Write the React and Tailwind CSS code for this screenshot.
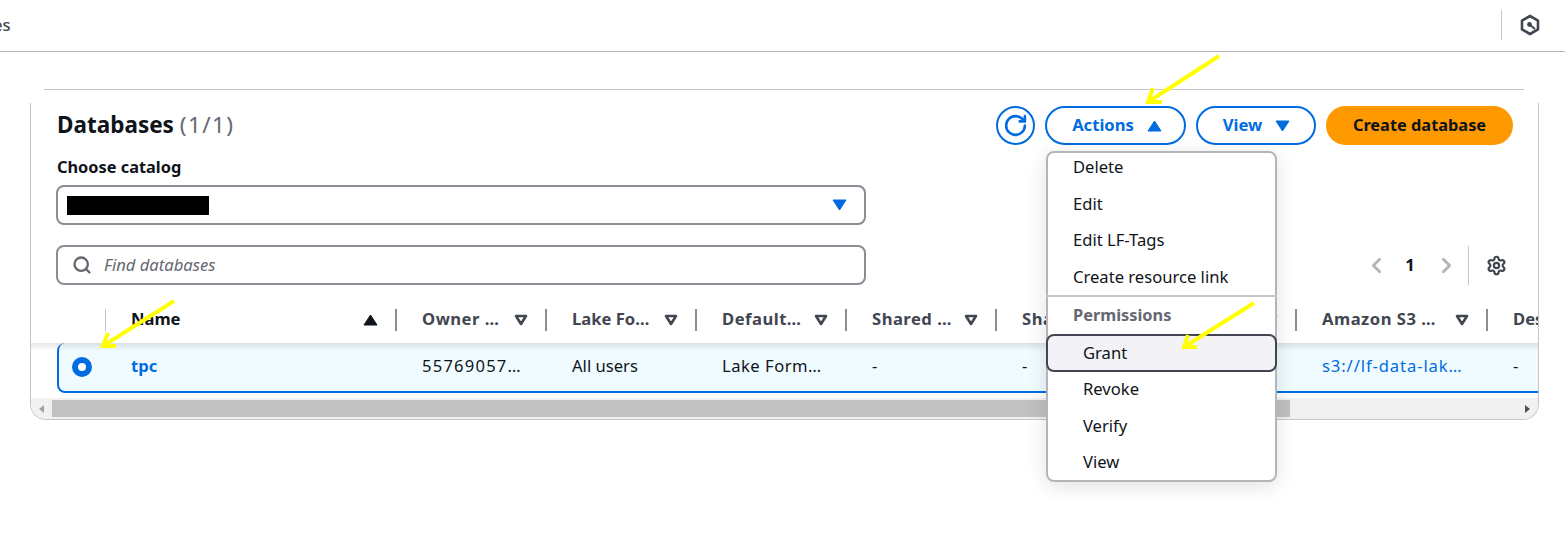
import React from "react";
import { RotateCw, Search, Settings, ChevronLeft, ChevronRight } from "lucide-react";

function Tri({ dir = "down", className = "" }) {
  return (
    <svg width="15" height="12" viewBox="0 0 15 12" className={className}>
      <path
        d={dir === "down" ? "M1 1h13L7.5 11z" : "M7.5 1L14 11H1z"}
        fill="currentColor"
        stroke="currentColor"
        strokeWidth="1"
        strokeLinejoin="round"
      />
    </svg>
  );
}

function HollowTri() {
  return (
    <svg width="14" height="12" viewBox="0 0 14 12" className="shrink-0 text-[#424650]">
      <path d="M2 2h10L7 10z" fill="none" stroke="currentColor" strokeWidth="2.6" strokeLinejoin="round" />
    </svg>
  );
}

function HeadCell({ label, wide, className = "" }) {
  return (
    <div className={`flex shrink-0 items-center pl-[25px] ${wide ? "w-[191px]" : "w-[150px]"}`}>
      <span className={`mb-[2px] min-w-0 flex-1 whitespace-nowrap font-bold text-[#424650] ${className}`}>{label}</span>
      <HollowTri />
      <span className="ml-[17px] h-[22px] w-[2px] bg-[#8c8c94]" />
    </div>
  );
}

function BodyCell({ children, wide, className = "" }) {
  return (
    <div className={`mb-[2px] shrink-0 whitespace-nowrap pl-[26px] ${wide ? "w-[191px]" : "w-[150px]"} ${className}`}>
      {children}
    </div>
  );
}

function MenuItem({ children, indent }) {
  return (
    <div className={`flex h-[36.5px] items-center text-[#0f141a] ${indent ? "pl-[35px]" : "pl-[25px]"}`}>{children}</div>
  );
}

function Arrow({ tip, tail, a, b }) {
  return (
    <g fill="none" stroke="#ffff00" strokeWidth="4">
      <path d={`M${tail[0]} ${tail[1]}L${tip[0]} ${tip[1]}`} />
      <path d={`M${a[0]} ${a[1]}L${tip[0]} ${tip[1]}L${b[0]} ${b[1]}`} />
    </g>
  );
}

export default function App() {
  return (
    <div
      className="relative h-[551px] w-[1565px] overflow-hidden bg-white text-[16.6px] leading-[22px] text-[#0f141a]"
      style={{ fontFamily: '"Noto Sans", "Open Sans", sans-serif' }}
    >
      <header className="flex h-[52px] items-center justify-between border-b border-[#b4b4bb]">
        <span className="-ml-[7px] -mt-[2px] font-medium text-[#424650]">es</span>
        <div className="-mt-[2px] flex h-[30px] items-center border-l border-[#c6c6cd] pl-[18px] pr-[25px]">
          <svg width="20" height="22" viewBox="0 0 20 22" fill="none" stroke="#424650" strokeWidth="2.6">
            <path d="M10 2l8 4.6v8.8L10 20l-8-4.6V6.6z" strokeLinejoin="round" />
            <circle cx="9.5" cy="10.5" r="2.4" fill="#424650" stroke="none" />
            <path d="M10 11l5 4" strokeWidth="2" />
          </svg>
        </div>
      </header>

      <div className="ml-[44px] mt-[37px] w-[1480px] border-t border-[#c6c6cd]" />

      <section className="ml-[30px] mt-[13px] h-[317px] w-[1509px] rounded-b-[16px] border-x border-b border-[#c6c6cd]">
        <div className="pl-[25px] pr-[25px] pt-[3px]">
          <div className="flex h-[39px] items-center justify-between">
            <h1 className="-mt-[2px] ml-[1px] text-[22.5px] font-bold leading-[30px]">
              Databases{" "}
              <span className="font-normal tracking-[1.4px] text-[#656871]">(1/1)</span>
            </h1>
            <div className="flex items-center gap-[10px]">
              <button className="flex h-[39px] w-[39px] items-center justify-center rounded-full border-2 border-[#006ce0] text-[#006ce0]">
                <RotateCw size={25} strokeWidth={2.5} />
              </button>
              <div className="relative">
                <button className="flex h-[39px] w-[141px] items-center justify-center gap-[13px] rounded-full border-2 border-[#006ce0] pl-[3px] font-bold text-[#006ce0]">
                  <span className="mb-[2px]">Actions</span> <Tri dir="up" />
                </button>
                <div className="absolute left-[1px] top-[45px] z-10 h-[331px] w-[231px] rounded-[8px] border-2 border-[#b4b4bb] bg-white shadow-[0_4px_20px_rgba(0,7,22,0.12)]">
                  <div className="-mt-[4px]">
                    <MenuItem>Delete</MenuItem>
                    <MenuItem>Edit</MenuItem>
                    <MenuItem>Edit LF-Tags</MenuItem>
                    <MenuItem>Create resource link</MenuItem>
                  </div>
                  <div className="-mx-[2px] border-t-2 border-[#c6c6cd]" />
                  <div className="flex h-[37px] items-center pb-[2px] pl-[25px] text-[16.35px] font-bold text-[#656871]">Permissions</div>
                  <div className="-mx-[2px] flex h-[38px] items-center rounded-[8px] border-2 border-[#424650] bg-[#f3f3f7] pl-[35px] text-[#0f141a]">
                    Grant
                  </div>
                  <div className="-mt-[1px]">
                    <MenuItem indent>Revoke</MenuItem>
                    <MenuItem indent>Verify</MenuItem>
                    <MenuItem indent>View</MenuItem>
                  </div>
                </div>
              </div>
              <button className="flex h-[39px] w-[120px] items-center justify-center gap-[13px] rounded-full border-2 border-[#006ce0] pl-[1px] font-bold text-[#006ce0]">
                <span className="mb-[2px]">View</span> <Tri />
              </button>
              <button className="flex h-[39px] w-[187px] items-center justify-center rounded-full bg-[#ff9900] pb-[2px] text-[16.35px] font-bold">
                Create database
              </button>
            </div>
          </div>

          <div className="mt-[11px] ml-[1px] text-[16.35px] font-bold">Choose catalog</div>
          <div className="mt-[7px] flex h-[40px] w-[810px] items-center justify-between rounded-[8px] border-2 border-[#8c8c94] pl-[9px] pr-[17px]">
            <div className="h-[19px] w-[142px] bg-black" />
            <Tri className="text-[#006ce0]" />
          </div>

          <div className="mt-[20px] flex items-center justify-between">
            <div className="flex h-[40px] w-[810px] items-center rounded-[8px] border-2 border-[#8c8c94] pl-[14px]">
              <Search size={20} strokeWidth={2.8} className="text-[#656871]" />
              <span className="ml-[12px] italic text-[#656871]">Find databases</span>
            </div>
            <div className="flex h-[40px] items-center pr-[6px] text-[#b4b4bb]">
              <ChevronLeft size={25} strokeWidth={2.8} />
              <span className="ml-[15px] w-[12px] text-center font-bold text-[#0f141a]">1</span>
              <ChevronRight size={25} strokeWidth={2.8} className="ml-[18px]" />
              <span className="ml-[9px] h-[39px] w-px bg-[#c6c6cd]" />
              <Settings size={21} strokeWidth={2.5} className="ml-[17px] text-[#424650]" />
            </div>
          </div>
        </div>

        <div className="mt-[11px] h-[47px] overflow-hidden">
          <div className="flex h-[47px] w-[1700px] items-center">
            <div className="flex w-[75px] shrink-0 justify-end">
              <span className="h-[22px] w-px bg-[#c6c6cd]" />
            </div>
            <div className="flex w-[291px] shrink-0 items-center pl-[25px]">
              <span className="mb-[2px] flex-1 font-bold">Name</span>
              <Tri dir="up" className="text-[#0f141a]" />
              <span className="ml-[17px] h-[22px] w-[2px] bg-[#8c8c94]" />
            </div>
            <HeadCell label="Owner …" className="tracking-[0.5px]" />
            <HeadCell label="Lake Fo…" />
            <HeadCell label="Default…" className="tracking-[0.5px]" />
            <HeadCell label="Shared …" className="tracking-[0.5px]" />
            <HeadCell label="Shared …" className="tracking-[0.5px]" />
            <HeadCell label="Shared …" className="tracking-[0.5px]" />
            <HeadCell label="Amazon S3 …" wide className="tracking-[0.5px]" />
            <HeadCell label="Description" />
          </div>
        </div>

        <div className="relative h-[55px] overflow-hidden">
          <div className="ml-[26px] flex h-[50px] w-[1700px] items-center rounded-l-[8px] border-b-2 border-l-2 border-[#006ce0] bg-[#f0fbff]">
            <div className="flex w-[46px] shrink-0 pl-[13px]">
              <span className="h-[20px] w-[20px] rounded-full border-[6px] border-[#006ce0] bg-white" />
            </div>
            <div className="mb-[2px] w-[291px] shrink-0 pl-[26px] font-bold text-[#006ce0]">tpc</div>
            <BodyCell className="tracking-[1.2px]">55769057…</BodyCell>
            <BodyCell>All users</BodyCell>
            <BodyCell className="tracking-[0.5px]">Lake Form…</BodyCell>
            <BodyCell>-</BodyCell>
            <BodyCell>-</BodyCell>
            <BodyCell>-</BodyCell>
            <BodyCell wide className="tracking-[0.9px] text-[#006ce0]">s3://lf-data-lak…</BodyCell>
            <BodyCell>-</BodyCell>
          </div>
          <div className="absolute inset-x-0 top-0 h-[8px] bg-linear-to-b from-black/10 to-transparent" />
        </div>

        <div className="relative flex h-[21px] items-center justify-between rounded-b-[15px] bg-[#f1f1f1] px-[7px]">
          <svg width="8" height="10" viewBox="0 0 8 10"><path d="M6 1v8L1 5z" fill="#a3a3a3" /></svg>
          <div className="absolute left-[21px] top-[2px] h-[17px] w-[1238px] bg-[#c1c1c1]" />
          <svg width="8" height="10" viewBox="0 0 8 10"><path d="M2 1v8l5-4z" fill="#505050" /></svg>
        </div>
      </section>

      <svg className="pointer-events-none absolute left-0 top-0 z-20" width="1565" height="551">
        <Arrow tip={[1148, 102]} tail={[1219, 56]} a={[1153, 88]} b={[1162, 102]} />
        <Arrow tip={[103, 346]} tail={[174, 301]} a={[108, 333]} b={[116, 346]} />
        <Arrow tip={[1184, 347]} tail={[1254, 303]} a={[1188, 335]} b={[1197, 347]} />
      </svg>
    </div>
  );
}
